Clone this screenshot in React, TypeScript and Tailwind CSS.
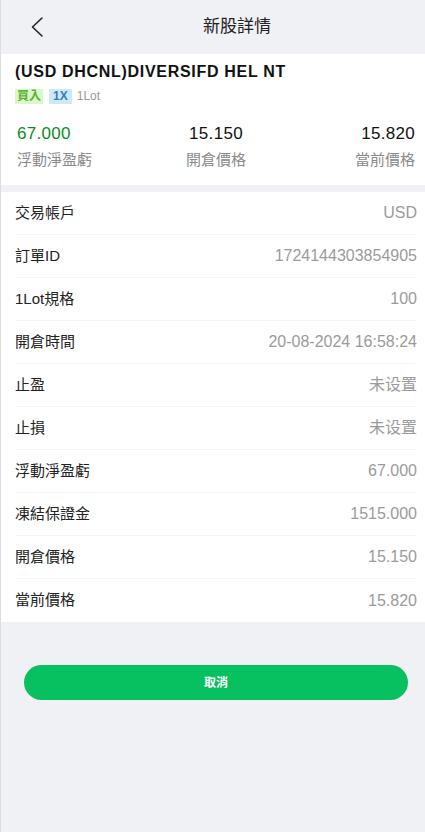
const rows: [string, string][] = [
  ['交易帳戶', 'USD'],
  ['訂單ID', '1724144303854905'],
  ['1Lot規格', '100'],
  ['開倉時間', '20-08-2024 16:58:24'],
  ['止盈', '未设置'],
  ['止損', '未设置'],
  ['浮動淨盈虧', '67.000'],
  ['凍結保證金', '1515.000'],
  ['開倉價格', '15.150'],
  ['當前價格', '15.820'],
];

export default function App() {
  return (
    <div
      className="min-h-[832px] w-[425px] bg-[#f0f1f5] border-l border-[#dcdde3]"
      style={{ fontFamily: '"Liberation Sans", Arial, "Noto Sans CJK TC", sans-serif' }}
    >
      {/* header */}
      <div className="relative flex h-[54px] items-center justify-center">
        <button className="absolute left-[26px] top-[12px] p-1">
          <svg width="14" height="22" viewBox="0 0 14 22" fill="none">
            <path d="M11 2 L1.5 11 L11 20" stroke="#222" strokeWidth="1.6" strokeLinecap="round" strokeLinejoin="round" />
          </svg>
        </button>
        <h1 className="pl-[48px] text-[17px] text-[#222]">新股詳情</h1>
      </div>

      {/* summary */}
      <div className="bg-white pt-[8px] pb-[16px]">
        <div className="px-[14px] text-[16px] font-bold leading-[20px] text-[#111] tracking-[0.7px]">
          (USD DHCNL)DIVERSIFD HEL NT
        </div>
        <div className="mt-[7px] flex items-center px-[14px] text-[12px] leading-[15px]">
          <span className="bg-[#d9f9cd] px-[2px] font-bold text-[#5bb42b]">買入</span>
          <span className="ml-[6px] bg-[#cfe8f7] px-[4px] font-bold text-[#2e7fbf]">1X</span>
          <span className="ml-[5px] text-[#9a9a9a]">1Lot</span>
        </div>
        <div className="mt-[20px] grid grid-cols-3 pl-4 pr-[10px]">
          <div className="text-left">
            <div className="text-[17px] leading-[20px] text-[#0b8a23] tracking-[0.3px]">67.000</div>
            <div className="mt-[7px] text-[15px] leading-[18px] text-[#8a8a8a]">浮動淨盈虧</div>
          </div>
          <div className="text-center">
            <div className="text-[17px] leading-[20px] text-[#111] tracking-[0.3px]">15.150</div>
            <div className="mt-[7px] text-[15px] leading-[18px] text-[#8a8a8a]">開倉價格</div>
          </div>
          <div className="text-right">
            <div className="text-[17px] leading-[20px] text-[#111] tracking-[0.3px]">15.820</div>
            <div className="mt-[7px] text-[15px] leading-[18px] text-[#8a8a8a]">當前價格</div>
          </div>
        </div>
      </div>

      {/* details */}
      <div className="mt-[7px] bg-white pl-[14px] pr-[8px]">
        {rows.map(([label, value], i) => (
          <div
            key={label}
            className={`flex h-[43px] items-center justify-between text-[15px] ${
              i < rows.length - 1 ? 'border-b border-[#f5f5f7]' : ''
            }`}
          >
            <span className="text-[#222]">{label}</span>
            <span className="text-[16px] text-[#9b9b9b]">{value}</span>
          </div>
        ))}
      </div>

      <div className="pl-[23px] pr-[17px] pt-[43px]">
        <button className="h-[35px] w-full rounded-full bg-[#07c160] text-[12px] font-bold text-white">
          取消
        </button>
      </div>
    </div>
  );
}
